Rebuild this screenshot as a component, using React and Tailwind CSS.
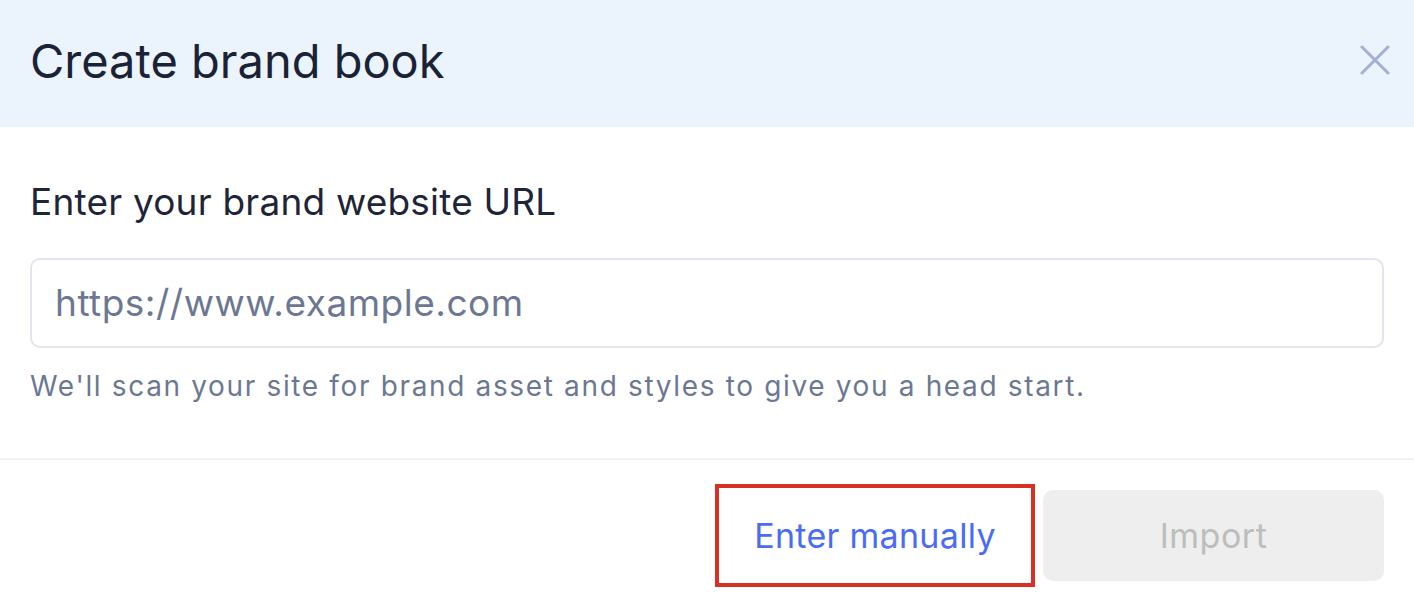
import React from "react";

function CloseIcon() {
    return (
        <svg width="30" height="30" viewBox="0 0 30 30" fill="none">
            <path d="M2 2L28 28M28 2L2 28" stroke="#a3aed0" strokeWidth="3" strokeLinecap="round" />
        </svg>
    );
}

export default function App() {
    return (
        <div className="w-full h-[610px] bg-white overflow-hidden" style={{fontFamily: "Inter, 'Noto Sans', sans-serif"}}>
            {/* header */}
            <div className="h-[127px] bg-[#ebf3fd] flex items-center justify-between pl-[30px] pr-[24px]">
                <h1 className="text-[47px] leading-none text-[#1a2236] pb-[6px]">Create brand book</h1>
                <button className="p-0 mb-[8px]">
                    <CloseIcon />
                </button>
            </div>

            {/* body */}
            <div className="px-[30px] pt-[52px] pb-[52px] border-b-2 border-[#eef1f8]">
                <label className="block text-[37px] leading-[46px] tracking-[0.2px] text-[#1e2538]">Enter your brand website URL</label>
                <div className="mt-[33px] h-[90px] border-2 border-[#e1e6ee] rounded-[10px] flex items-center px-[23px]">
                    <span className="text-[37px] tracking-[0.5px] text-[#6c7893]">https://www.example.com</span>
                </div>
                <p className="mt-[18px] text-[28px] leading-[40px] tracking-[1.65px] text-[#6c7893]">
                    We'll scan your site for brand asset and styles to give you a head start.
                </p>
            </div>

            {/* footer */}
            <div className="flex justify-end items-center gap-[8px] px-[30px] pt-[24px]">
                <button className="w-[320px] h-[103px] border-4 border-[#d93025] flex items-center justify-center text-[34px] tracking-[0.3px] text-[#4a6cf4]">
                    Enter manually
                </button>
                <button className="w-[341px] h-[91px] rounded-[10px] bg-[#eeeeee] flex items-center justify-center text-[34px] tracking-[0.5px] text-[#bdbdbd]">
                    Import
                </button>
            </div>
        </div>
    );
}
